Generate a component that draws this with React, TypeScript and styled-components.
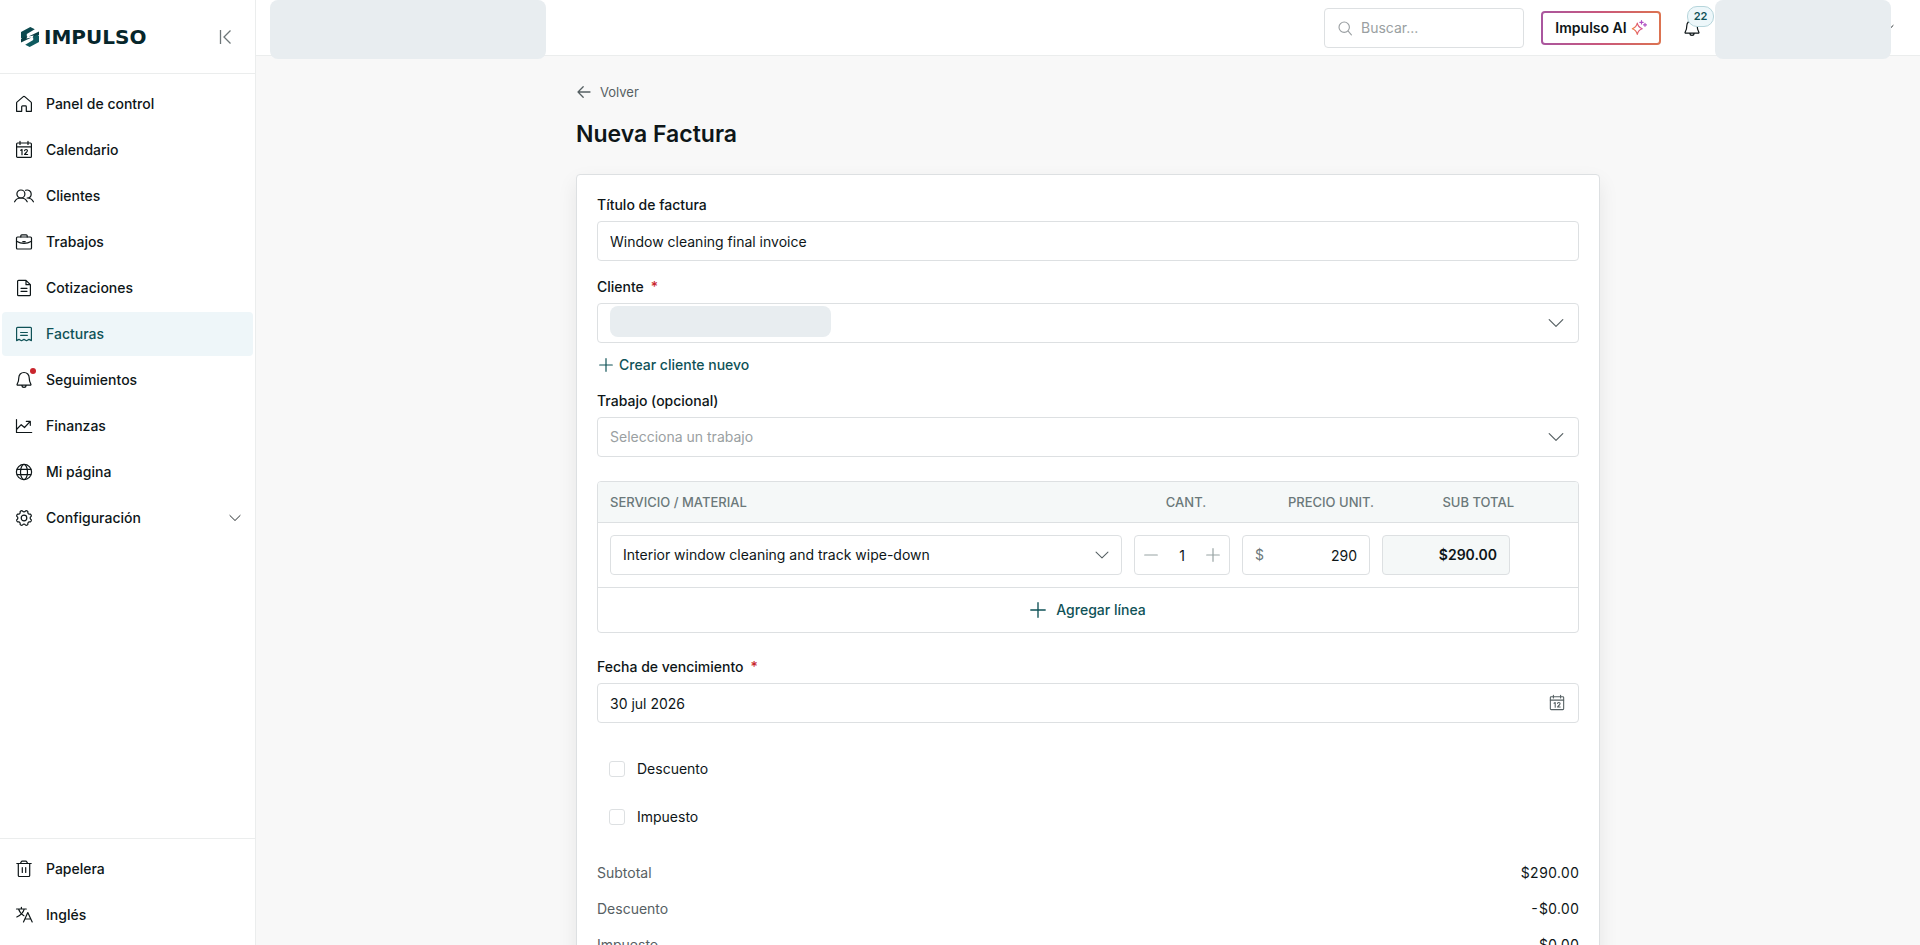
import React, { useState } from "react";
import styled, { createGlobalStyle } from "styled-components";

const color = {
  ink: "#0e1618",
  muted: "#566063",
  faint: "#9a9fa2",
  head: "#6b787a",
  teal: "#0f5257",
  tint: "#eef6f9",
  line: "#dde0e2",
  soft: "#ebeded",
  page: "#f8f8f8",
  panel: "#f5f8f8",
  block: "#e8edf0",
  red: "#c9252d",
};

const GlobalStyle = createGlobalStyle`
  *, *::before, *::after { box-sizing: border-box; }
  body {
    margin: 0;
    background: ${color.page};
    color: ${color.ink};
    font-family: Inter, "Liberation Sans", sans-serif;
    font-size: 14px;
    line-height: 20px;
  }
  button, input, select { font: inherit; color: inherit; }
  a { color: inherit; text-decoration: none; }
`;

/* ---------- layout ---------- */

const Shell = styled.div`
  display: flex;
  height: 100vh;
  overflow: hidden;
`;

const Sidebar = styled.aside`
  flex: 0 0 256px;
  display: flex;
  flex-direction: column;
  background: #fff;
  border-right: 1px solid ${color.soft};
`;

const SidebarHeader = styled.div`
  display: flex;
  align-items: center;
  justify-content: space-between;
  height: 74px;
  padding: 0 20px;
  border-bottom: 1px solid ${color.soft};
`;

const Logo = styled.a`
  display: flex;
  align-items: center;
  gap: 4px;
  color: #06262b;
  font-family: "DejaVu Sans", Verdana, sans-serif;
  font-size: 20px;
  font-weight: 700;
  line-height: 24px;
`;

const IconButton = styled.button`
  display: grid;
  place-items: center;
  padding: 0;
  border: 0;
  background: none;
  cursor: pointer;
`;

const NavList = styled.nav<{ $bottom?: boolean }>`
  display: flex;
  flex-direction: column;
  gap: 2px;
  padding: 8px 2px;
  ${(p) => p.$bottom && `margin-top: auto; border-top: 1px solid ${color.soft};`}
`;

const NavLink = styled.a<{ $active?: boolean }>`
  display: flex;
  align-items: center;
  gap: 12px;
  height: 44px;
  padding: 0 12px;
  border-radius: 4px;
  font-weight: 500;
  color: ${(p) => (p.$active ? color.teal : color.ink)};
  background: ${(p) => (p.$active ? color.tint : "transparent")};
`;

const NavLabel = styled.span`
  flex: 1;
`;

const NavIcon = styled.span`
  position: relative;
  display: flex;
`;

const Dot = styled.i`
  position: absolute;
  top: -2px;
  right: -2px;
  width: 6px;
  height: 6px;
  border-radius: 50%;
  background: ${color.red};
`;

const Column = styled.div`
  flex: 1;
  min-width: 0;
  display: flex;
  flex-direction: column;
`;

const Topbar = styled.header`
  flex: none;
  display: flex;
  align-items: center;
  height: 56px;
  padding: 0 26px 0 14px;
  background: #fff;
  border-bottom: 1px solid ${color.soft};
`;

const TopBlock = styled.div<{ $width: number }>`
  position: relative;
  z-index: 1;
  align-self: flex-start;
  flex: none;
  width: ${(p) => p.$width}px;
  height: 59px;
  border-radius: 8px;
  background: ${color.block};
`;

const Tools = styled.div`
  display: flex;
  align-items: center;
  align-self: stretch;
  margin-left: auto;
`;

const Search = styled.label`
  display: flex;
  align-items: center;
  gap: 8px;
  width: 200px;
  height: 40px;
  margin-right: 17px;
  padding: 0 12px;
  border: 1px solid ${color.line};
  border-radius: 4px;
  color: ${color.faint};
`;

const SearchInput = styled.input`
  min-width: 0;
  flex: 1;
  padding: 0;
  border: 0;
  outline: 0;
  background: none;
  color: ${color.ink};
  &::placeholder { color: ${color.faint}; opacity: 1; }
`;

const AiButton = styled.button`
  display: flex;
  align-items: center;
  justify-content: center;
  gap: 4px;
  width: 120px;
  height: 34px;
  margin-right: 21px;
  padding: 0;
  border: 2px solid transparent;
  border-radius: 4px;
  background:
    linear-gradient(#fff, #fff) padding-box,
    linear-gradient(90deg, #a9569f, #c9577c 50%, #dc7350) border-box;
  font-weight: 600;
  cursor: pointer;
`;

const BellButton = styled(IconButton)`
  position: relative;
  width: 20px;
  height: 20px;
  margin-right: 13px;
`;

const Badge = styled.span`
  position: absolute;
  left: 5px;
  top: -12px;
  width: 27px;
  height: 21px;
  border: 1px solid #b5d5db;
  border-radius: 10px;
  background: #edf7fa;
  color: ${color.teal};
  font-size: 11px;
  font-weight: 600;
  line-height: 19px;
  text-align: center;
`;

const AccountChevron = styled.span`
  display: flex;
  margin-left: -9px;
`;

const Main = styled.main`
  flex: 1;
  overflow-y: auto;
  scrollbar-width: none;
  padding: 24px;
`;

const Content = styled.div`
  max-width: 1024px;
  margin: 0 auto;
`;

const Back = styled.a`
  display: flex;
  align-items: center;
  gap: 8px;
  width: fit-content;
  height: 24px;
  color: ${color.muted};
  font-size: 13px;
`;

const Title = styled.h1`
  margin: 14px 0 24px;
  font-size: 23px;
  font-weight: 600;
  line-height: 32px;
`;

const Card = styled.form`
  padding: 20px;
  border: 1px solid ${color.line};
  border-radius: 4px;
  background: #fff;
  box-shadow: 0 8px 20px rgba(0, 0, 0, 0.08);
`;

/* ---------- form parts ---------- */

const Field = styled.div<{ $space?: number }>`
  display: flex;
  flex-direction: column;
  gap: 6px;
  margin-bottom: ${(p) => p.$space ?? 16}px;
`;

const Label = styled.label`
  font-weight: 500;
`;

const Required = styled.span`
  margin-left: 7px;
  color: ${color.red};
`;

const Control = styled.div<{ $shaded?: boolean }>`
  position: relative;
  display: flex;
  align-items: center;
  height: 40px;
  border: 1px solid ${color.line};
  border-radius: 4px;
  background: ${(p) => (p.$shaded ? color.panel : "#fff")};
`;

const TextInput = styled.input<{ $right?: boolean }>`
  flex: 1;
  min-width: 0;
  width: 100%;
  height: 100%;
  padding: 0 12px;
  border: 0;
  outline: 0;
  background: none;
  text-align: ${(p) => (p.$right ? "right" : "left")};
`;

const Select = styled.select<{ $empty?: boolean }>`
  flex: 1;
  min-width: 0;
  height: 100%;
  padding: 0 40px 0 12px;
  border: 0;
  outline: 0;
  appearance: none;
  background: none;
  color: ${(p) => (p.$empty ? color.faint : color.ink)};
`;

const Trailing = styled.span<{ $inset?: number }>`
  position: absolute;
  right: ${(p) => p.$inset ?? 14}px;
  display: flex;
  color: ${color.muted};
  pointer-events: none;
`;

const ClientBlock = styled.span`
  position: absolute;
  left: 12px;
  top: 2px;
  width: 221px;
  height: 31px;
  border-radius: 8px;
  background: ${color.block};
  pointer-events: none;
`;

const TextButton = styled.button<{ $wide?: boolean }>`
  display: flex;
  align-items: center;
  justify-content: ${(p) => (p.$wide ? "center" : "flex-start")};
  gap: ${(p) => (p.$wide ? 10 : 6)}px;
  width: ${(p) => (p.$wide ? "100%" : "auto")};
  height: ${(p) => (p.$wide ? 44 : 20)}px;
  margin: ${(p) => (p.$wide ? "0" : "-4px 0 16px")};
  padding: ${(p) => (p.$wide ? "0" : "0 2px")};
  border: 0;
  background: none;
  color: ${color.teal};
  font-weight: 500;
  cursor: pointer;
`;

const Lines = styled.section`
  margin: 24px 0;
  border: 1px solid ${color.line};
  border-radius: 4px;
  overflow: hidden;
`;

const LinesTable = styled.table`
  display: block;
`;

const LinesHead = styled.thead`
  display: block;
`;

const LinesBody = styled.tbody`
  display: block;
`;

const LineRow = styled.tr<{ $head?: boolean }>`
  display: grid;
  grid-template-columns: minmax(0, 1fr) 96px 128px 128px ${(p) => (p.$head ? 40 : 44)}px;
  gap: 12px;
  align-items: center;
  padding: ${(p) => (p.$head ? "10px 12px" : "12px")};
  border-bottom: 1px solid ${color.line};
  background: ${(p) => (p.$head ? color.panel : "#fff")};
`;

const HeadCell = styled.th<{ $align?: string }>`
  padding: 0;
  color: ${color.head};
  font-size: 13px;
  font-weight: 500;
  text-align: ${(p) => p.$align ?? "left"};
  text-transform: uppercase;
`;

const Cell = styled.td`
  padding: 0;
`;

const StepButton = styled(IconButton)`
  flex: 0 0 32px;
  height: 100%;
  color: #98a3a3;
`;

const QtyInput = styled(TextInput)`
  padding: 0;
  text-align: center;
`;

const Currency = styled.span`
  padding-left: 12px;
  color: ${color.head};
`;

const LineTotal = styled.output`
  flex: 1;
  padding: 0 12px;
  font-weight: 600;
  text-align: right;
`;

const Checks = styled.div`
  display: flex;
  flex-direction: column;
  gap: 4px;
  margin-bottom: 24px;
`;

const CheckLabel = styled.label`
  display: flex;
  align-items: center;
  gap: 12px;
  height: 44px;
  padding: 0 12px;
`;

const Checkbox = styled.input`
  appearance: none;
  width: 16px;
  height: 16px;
  margin: 0;
  border: 1px solid ${color.line};
  border-radius: 3px;
  background: #fff;
  &:checked { background: ${color.teal}; border-color: ${color.teal}; }
`;

const Totals = styled.dl`
  display: flex;
  flex-direction: column;
  gap: 16px;
  margin: 0;
`;

const TotalRow = styled.div`
  display: flex;
  justify-content: space-between;
`;

const TotalName = styled.dt`
  color: ${color.muted};
`;

const TotalValue = styled.dd`
  margin: 0;
  font-variant-numeric: tabular-nums;
`;

/* ---------- icons ---------- */

const Svg = ({ size = 20, w = 1.2, children }: { size?: number; w?: number; children: React.ReactNode }) => (
  <svg width={size} height={size} viewBox="0 0 20 20" fill="none" stroke="currentColor" strokeWidth={w} strokeLinecap="round" strokeLinejoin="round" aria-hidden="true">
    {children}
  </svg>
);

const gearPath = (() => {
  const pts: string[] = [];
  for (let i = 0; i < 160; i++) {
    const t = (i / 160) * Math.PI * 2;
    const r = 6.95 + 0.75 * Math.tanh(2.2 * Math.cos(8 * t + Math.PI));
    pts.push(`${(10 + r * Math.cos(t)).toFixed(2)} ${(10 + r * Math.sin(t)).toFixed(2)}`);
  }
  return `M${pts.join("L")}Z`;
})();

const icons = {
  home: <path d="M2.6 17.3V8.9a1 1 0 0 1 .35-.75L9 2.9a1.5 1.5 0 0 1 2 0l6.05 5.25a1 1 0 0 1 .35.75v8.4h-5.1v-4.6a.8.8 0 0 0-.8-.8h-3a.8.8 0 0 0-.8.8v4.6Z" />,
  calendar: (
    <>
      <rect x="2.6" y="3" width="14.8" height="14.4" rx="1" />
      <path d="M2.6 6.800h14.800M6 1.400v3M14 1.400v3" />
      <path d="M6.700 10.300 8 9.500v5.200M10.600 10.600c.2-1.500 3-1.500 2.800.2-.1 1.300-2 2.200-2.800 3.700h3" />
    </>
  ),
  users: (
    <>
      <circle cx="6.900" cy="8" r="4" />
      <path d="M.6 15.800c1.200-2.500 3.500-3.800 6.300-3.800s5.100 1.300 6.300 3.800M11.600 4.300c3-1 5.600 1 5.600 3.700s-2.100 4-4.100 4c2.800 0 5 1.200 6.300 3.800" />
    </>
  ),
  briefcase: (
    <>
      <rect x="2.500" y="5" width="15" height="12" rx="1" />
      <path d="M6.800 5V3.800a1 1 0 0 1 1-1h4.400a1 1 0 0 1 1 1V5M2.500 9.200c4.600 2.700 10.400 2.700 15 0M8.800 9.600h2.400" />
    </>
  ),
  document: <path d="M12 2.300H4.600a1 1 0 0 0-1 1v13.400a1 1 0 0 0 1 1h10.800a1 1 0 0 0 1-1V6.700ZM12 2.300v4.400h4.400M7 10.300h6M7 13.300h6" />,
  receipt: <path d="M2.600 16.600V4.200a.9.900 0 0 1 .9-.9h13a.9.900 0 0 1 .9.900v12.400l-2.400-1.200-2.500 1.300-2.500-1.300-2.500 1.300L5 15.400ZM6.600 8.500h6.800M6.600 11.300h6.800" />,
  bell: <path d="M10 2.500c-3.100 0-5.200 2.300-5.200 5.300 0 3.700-.9 4.900-1.700 6.400-.2.500.1 1 .6 1h12.600c.5 0 .8-.5.6-1-.8-1.500-1.700-2.700-1.700-6.400 0-3-2.100-5.300-5.200-5.300ZM7.800 15.400c.2 2.600 4.200 2.600 4.400 0" />,
  chart: <path d="M2.500 3.500v13h15.200M3 13l4.200-4.300 3.300 2.800L16 5.700M12.300 5.300h4v4" />,
  globe: (
    <>
      <circle cx="10" cy="10" r="7.600" />
      <ellipse cx="10" cy="10" rx="3.500" ry="7.600" />
      <path d="M3.200 7.300h13.600M3.200 12.700h13.600" />
    </>
  ),
  gear: (
    <>
      <path d={gearPath} />
      <circle cx="10" cy="10" r="2.800" />
    </>
  ),
  trash: <path d="M2.800 4.500h14.400M4.300 4.500v12a1 1 0 0 0 1 1h9.400a1 1 0 0 0 1-1v-12M6.500 4.300l.8-1.600a1 1 0 0 1 .9-.5h3.600a1 1 0 0 1 .9.500l.8 1.600M8.300 8.500v5M11.700 8.500v5" />,
  translate: <path d="M2.500 4h9.800M7.400 2.300V4M4.600 4.200c.8 2.700 3 5.200 5.300 6.500M10.200 4.200C9.300 7.500 6.200 10.500 2.800 12M9.500 17l4.300-9.500L18.200 17M11 14h5.700" />,
};

type IconName = keyof typeof icons;

const ChevronDown = ({ size = 16 }: { size?: number }) => (
  <Svg size={size} w={1.5}>
    <path d="M1.5 5.800 10 14.200l8.500-8.400" />
  </Svg>
);

const Plus = ({ size = 14 }: { size?: number }) => (
  <Svg size={size} w={1.7}>
    <path d="M10 1v18M1 10h18" />
  </Svg>
);

const LogoMark = () => (
  <svg width="20" height="20" viewBox="0 0 20 20" aria-hidden="true">
    <path d="M1 5 10.300 0 14.800 2.300 6.800 7v3.200L3 12.400 1 11Z" fill="#0d4a4f" />
    <path d="M19 4.600v3.300L12.600 11l1-2.600-5.100 1.200Z" fill="#0b3e43" />
    <path d="M19 15 9.700 20 5.200 17.700l8-4.700V9.800L17 7.600 19 9Z" fill="#0f5a5f" />
    <path d="M1 15.400v-3.300L7.400 9l-1 2.600 5.100-1.200Z" fill="#0b3e43" />
  </svg>
);

const Sparkles = () => (
  <svg width="16" height="16" viewBox="0 0 16 16" fill="none" aria-hidden="true">
    <defs>
      <linearGradient id="spark" x1="1" y1="8" x2="15" y2="6" gradientUnits="userSpaceOnUse">
        <stop stopColor="#f0803c" />
        <stop offset="0.600" stopColor="#d94f86" />
        <stop offset="1" stopColor="#a74fd0" />
      </linearGradient>
    </defs>
    <path d="M6.300 3.200c.6 3 1.800 4.400 4.900 5.500-3.100 1.100-4.300 2.500-4.900 5.700-.7-3.200-1.900-4.600-5-5.700 3.100-1.100 4.300-2.500 5-5.500Z" stroke="url(#spark)" strokeWidth="1.200" strokeLinejoin="round" />
    <path d="M10.500.6v3.400M8.800 2.300h3.400M14 3.300v3M12.500 4.800h3" stroke="#b04fc4" strokeWidth="1.200" strokeLinecap="round" />
  </svg>
);

/* ---------- data ---------- */

type NavEntry = { icon: IconName; label: string; active?: boolean; dot?: boolean; expandable?: boolean };

const mainNav: NavEntry[] = [
  { icon: "home", label: "Panel de control" },
  { icon: "calendar", label: "Calendario" },
  { icon: "users", label: "Clientes" },
  { icon: "briefcase", label: "Trabajos" },
  { icon: "document", label: "Cotizaciones" },
  { icon: "receipt", label: "Facturas", active: true },
  { icon: "bell", label: "Seguimientos", dot: true },
  { icon: "chart", label: "Finanzas" },
  { icon: "globe", label: "Mi página" },
  { icon: "gear", label: "Configuración", expandable: true },
];

const footNav: NavEntry[] = [
  { icon: "trash", label: "Papelera" },
  { icon: "translate", label: "Inglés" },
];

const NavItem = ({ icon, label, active, dot, expandable }: NavEntry) => (
  <NavLink href="#" $active={active} aria-current={active ? "page" : undefined}>
    <NavIcon>
      <Svg>{icons[icon]}</Svg>
      {dot && <Dot />}
    </NavIcon>
    <NavLabel>{label}</NavLabel>
    {expandable && <ChevronDown size={12} />}
  </NavLink>
);

export default function App() {
  const [qty, setQty] = useState(1);
  const [price, setPrice] = useState("290");
  const money = (n: number) => `$${n.toFixed(2)}`;
  const subtotal = qty * (Number(price) || 0);

  return (
    <>
      <GlobalStyle />
      <Shell>
        <Sidebar>
          <SidebarHeader>
            <Logo href="#">
              <LogoMark />
              IMPULSO
            </Logo>
            <IconButton type="button" aria-label="Contraer menú">
              <svg width="20" height="20" viewBox="0 0 20 20" fill="none" stroke="#6d7678" strokeWidth="1.300" aria-hidden="true">
                <path d="M5.500 3v14M15.500 3.500 9 10l6.500 6.500" />
              </svg>
            </IconButton>
          </SidebarHeader>
          <NavList aria-label="Principal">
            {mainNav.map((n) => (
              <NavItem key={n.label} {...n} />
            ))}
          </NavList>
          <NavList $bottom aria-label="Secundaria">
            {footNav.map((n) => (
              <NavItem key={n.label} {...n} />
            ))}
          </NavList>
        </Sidebar>

        <Column>
          <Topbar>
            <TopBlock $width={276} />
            <Tools>
              <Search>
                <Svg size={16} w={1.4}>
                  <circle cx="9" cy="9" r="6.500" />
                  <path d="m14 14 4 4.500" />
                </Svg>
                <SearchInput type="search" placeholder="Buscar..." aria-label="Buscar" />
              </Search>
              <AiButton type="button">
                Impulso AI
                <Sparkles />
              </AiButton>
              <BellButton type="button" aria-label="Notificaciones">
                <Svg>{icons.bell}</Svg>
                <Badge>22</Badge>
              </BellButton>
              <TopBlock $width={176} />
              <AccountChevron>
                <ChevronDown size={12} />
              </AccountChevron>
            </Tools>
          </Topbar>

          <Main>
            <Content>
              <Back href="#">
                <Svg size={16} w={1.6}>
                  <path d="M17.500 10H2.500M9 3.500 2.500 10 9 16.500" />
                </Svg>
                Volver
              </Back>
              <Title>Nueva Factura</Title>

              <Card onSubmit={(e) => e.preventDefault()}>
                <Field>
                  <Label htmlFor="title">Título de factura</Label>
                  <Control>
                    <TextInput id="title" defaultValue="Window cleaning final invoice" />
                  </Control>
                </Field>

                <Field>
                  <Label htmlFor="client">
                    Cliente
                    <Required>*</Required>
                  </Label>
                  <Control>
                    <Select id="client" />
                    <ClientBlock />
                    <Trailing>
                      <ChevronDown />
                    </Trailing>
                  </Control>
                </Field>
                <TextButton type="button">
                  <Plus />
                  Crear cliente nuevo
                </TextButton>

                <Field $space={24}>
                  <Label htmlFor="job">Trabajo (opcional)</Label>
                  <Control>
                    <Select id="job" $empty>
                      <option>Selecciona un trabajo</option>
                    </Select>
                    <Trailing>
                      <ChevronDown />
                    </Trailing>
                  </Control>
                </Field>

                <Lines>
                  <LinesTable>
                    <LinesHead>
                      <LineRow $head>
                        <HeadCell>Servicio / Material</HeadCell>
                        <HeadCell $align="center">Cant.</HeadCell>
                        <HeadCell $align="right">Precio unit.</HeadCell>
                        <HeadCell $align="right">Sub total</HeadCell>
                      </LineRow>
                    </LinesHead>
                    <LinesBody>
                      <LineRow>
                        <Cell>
                          <Control>
                            <Select aria-label="Servicio o material">
                              <option>Interior window cleaning and track wipe-down</option>
                            </Select>
                            <Trailing $inset={12}>
                              <ChevronDown size={14} />
                            </Trailing>
                          </Control>
                        </Cell>
                        <Cell>
                          <Control>
                            <StepButton type="button" aria-label="Restar" onClick={() => setQty(Math.max(1, qty - 1))}>
                              <Svg size={14} w={1.7}>
                                <path d="M1 10h18" />
                              </Svg>
                            </StepButton>
                            <QtyInput aria-label="Cantidad" value={qty} onChange={(e) => setQty(Number(e.target.value) || 1)} />
                            <StepButton type="button" aria-label="Sumar" onClick={() => setQty(qty + 1)}>
                              <Plus />
                            </StepButton>
                          </Control>
                        </Cell>
                        <Cell>
                          <Control>
                            <Currency>$</Currency>
                            <TextInput $right aria-label="Precio unitario" value={price} onChange={(e) => setPrice(e.target.value)} />
                          </Control>
                        </Cell>
                        <Cell>
                          <Control $shaded>
                            <LineTotal>{money(subtotal)}</LineTotal>
                          </Control>
                        </Cell>
                      </LineRow>
                    </LinesBody>
                  </LinesTable>
                  <TextButton type="button" $wide>
                    <Plus size={16} />
                    Agregar línea
                  </TextButton>
                </Lines>

                <Field $space={24}>
                  <Label htmlFor="due">
                    Fecha de vencimiento
                    <Required>*</Required>
                  </Label>
                  <Control>
                    <TextInput id="due" defaultValue="30 jul 2026" />
                    <Trailing $inset={12}>
                      <Svg size={18}>{icons.calendar}</Svg>
                    </Trailing>
                  </Control>
                </Field>

                <Checks>
                  <CheckLabel>
                    <Checkbox type="checkbox" />
                    Descuento
                  </CheckLabel>
                  <CheckLabel>
                    <Checkbox type="checkbox" />
                    Impuesto
                  </CheckLabel>
                </Checks>

                <Totals>
                  <TotalRow>
                    <TotalName>Subtotal</TotalName>
                    <TotalValue>{money(subtotal)}</TotalValue>
                  </TotalRow>
                  <TotalRow>
                    <TotalName>Descuento</TotalName>
                    <TotalValue>-{money(0)}</TotalValue>
                  </TotalRow>
                  <TotalRow>
                    <TotalName>Impuesto</TotalName>
                    <TotalValue>{money(0)}</TotalValue>
                  </TotalRow>
                </Totals>
              </Card>
            </Content>
          </Main>
        </Column>
      </Shell>
    </>
  );
}
